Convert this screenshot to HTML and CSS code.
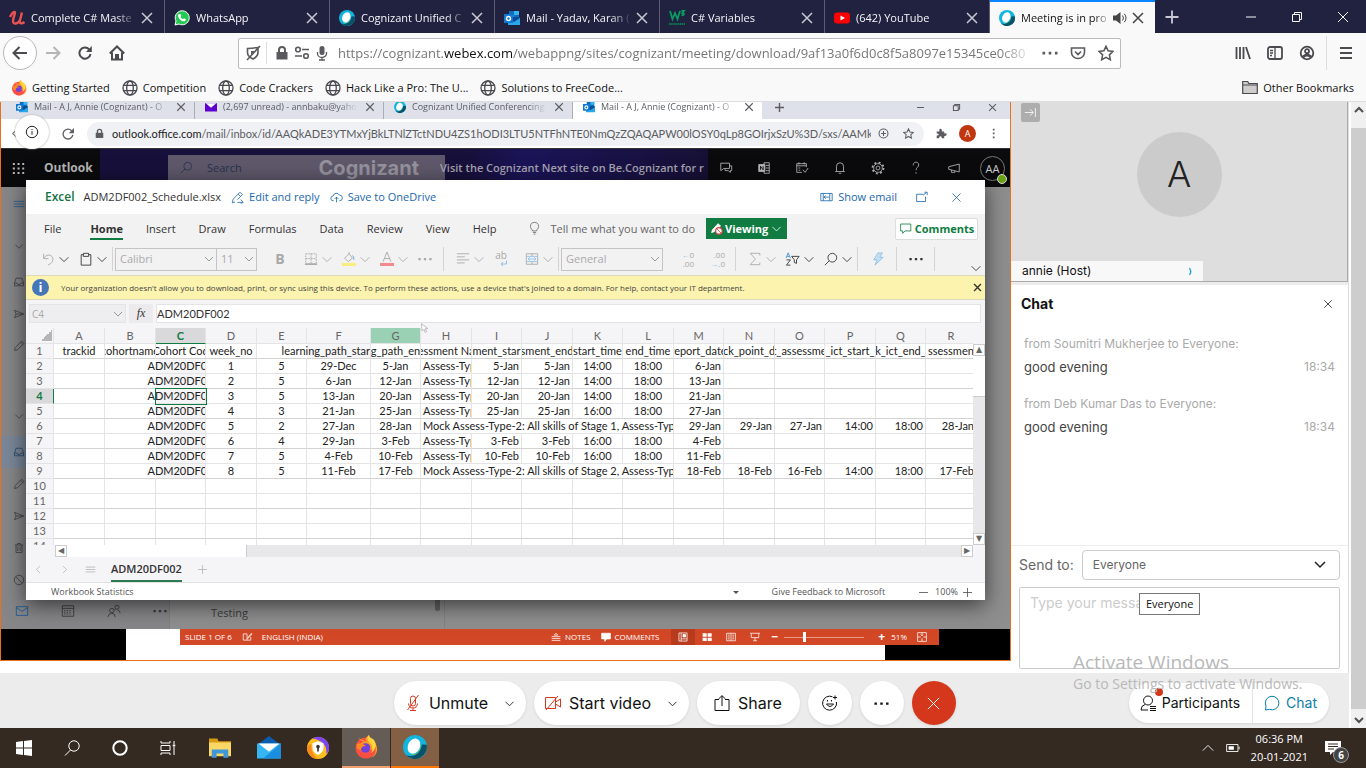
FILE: index.html
```html
<!DOCTYPE html>
<html lang="en">
<head>
<meta charset="utf-8">
<meta name="viewport" content="width=device-width, initial-scale=1">
<title>Meeting is in progress</title>
<link rel="stylesheet" href="styles.css">
</head>
<body>
<svg class="sprite" aria-hidden="true">
  <symbol id="x" viewBox="0 0 16 16"><path d="M3 3l10 10M13 3L3 13"/></symbol>
  <symbol id="chev" viewBox="0 0 16 16"><path d="M3 6l5 5 5-5"/></symbol>
  <symbol id="plus" viewBox="0 0 16 16"><path d="M8 1.500v13M1.500 8h13"/></symbol>
  <symbol id="min" viewBox="0 0 16 16"><path d="M3 8h10"/></symbol>
  <symbol id="restore" viewBox="0 0 16 16"><path d="M3.500 5.500h7v7h-7zM5.500 5.500v-2h7v7h-2"/></symbol>
  <symbol id="dots" viewBox="0 0 16 16"><path fill="currentColor" stroke="none" d="M.5 6.800h2.600v2.600H.5zM6.700 6.800h2.600v2.600H6.700zM12.900 6.800h2.600v2.600h-2.600z"/></symbol>
  <symbol id="reload" viewBox="0 0 16 16"><path d="M13.500 9a5.600 5.600 0 1 1-1.300-4.600"/><path fill="currentColor" stroke="none" d="M14.800 1v6H8.900z"/></symbol>
  <symbol id="lock" viewBox="0 0 16 16"><path fill="currentColor" stroke="none" d="M2.500 7h11v7.500h-11z"/><path stroke-width="2" d="M5 7.500V5a3 3 0 0 1 6 0v2.500"/></symbol>
  <symbol id="star" viewBox="0 0 16 16"><path d="M8 1.300l2.100 4.500 4.900.6-3.600 3.400.9 4.900L8 12.300l-4.300 2.400.9-4.900L1 6.400l4.900-.6z"/></symbol>
  <symbol id="globe" viewBox="0 0 16 16"><circle cx="8" cy="8" r="7"/><ellipse cx="8" cy="8" rx="3.300" ry="7"/><path d="M1.500 5.300h13M1.500 10.700h13"/></symbol>
  <symbol id="webex" viewBox="0 0 16 16"><circle cx="8" cy="8" r="8" fill="#12b5dd" stroke="none"/><path fill="#0b5269" stroke="none" d="M15.800 6.500A8 8 0 0 1 2 13.300c5 2 10-1 10.500-7z"/><path fill="#74bf4b" stroke="none" d="M10.500 2.800A6.300 6.300 0 0 1 4 12.800c5 2.500 10.800-4 6.500-10z"/><ellipse cx="7.300" cy="7.400" rx="4" ry="5.300" transform="rotate(25 7.300 7.400)" fill="#fff" stroke="none"/></symbol>
  <symbol id="outlook" viewBox="0 0 16 16"><g stroke="none"><path fill="#0f6cbd" d="M5 1h10v8H5z"/><path fill="#35b8f1" d="M10 1h5v4h-5z"/><path fill="#1490df" d="M5 5h5v4H5z"/><path fill="#28a8ea" d="M4 8l12 0v7H4z"/><path fill="#0a4a92" d="M4 8l6 4 6-4v-1H4z"/><path fill="#0f78d4" d="M0 4h9v9H0z"/></g><circle cx="4.500" cy="8.500" r="2" stroke="#fff" stroke-width="1.400"/></symbol>
  <symbol id="firefox" viewBox="0 0 24 24"><g stroke="none"><circle cx="12" cy="13" r="10.500" fill="#ff4f42"/><path fill="#ff9a24" d="M5 3c0 2 3 3 5 4-3 0-5 2-4 6 1 5 8 6 10 2 3 0 4-3 4-6 3 5 2 11-3 14 8-3 8-14 1-18-2-1-3-3-3-5-3 2-4 4-3 7-2-2-5-2-7-4z"/><path fill="#ffd53c" d="M15 0c-3 3-1 6 1 8 3 3 3 7 1 10 6-4 6-10 2-14-2-1-4-2-4-4z"/><circle cx="11.500" cy="13" r="4.800" fill="#7141d8"/><path fill="#ff8a1f" d="M3 9c3-1 7 0 9 2-3 0-5 1-5 4-4 0-5-3-4-6z"/></g></symbol>
  <symbol id="inbox" viewBox="0 0 16 16"><path d="M2 9.500L4 3h8l2 6.500V13H2zM2 9.500h3.500l1 1.800h3l1-1.800H14"/></symbol>
  <symbol id="send" viewBox="0 0 16 16"><path d="M2 3l12 5-12 5 2-5zM4 8h10"/></symbol>
  <symbol id="pencil" viewBox="0 0 16 16"><path d="M2 14l1-4 8.500-8.500 3 3L6 13zM10 3l3 3"/></symbol>
  <symbol id="ham" viewBox="0 0 16 16"><path d="M1 4.500h14M1 8h14M1 11.500h14"/></symbol>
  <symbol id="info" viewBox="0 0 16 16"><circle cx="8" cy="8" r="5.700"/><path d="M8 7.200v3.600M8 5v1"/></symbol>
</svg>

<header class="tabs">
  <button class="tab"><svg class="i" viewBox="0 0 16 16"><path stroke="#ea5252" stroke-width="2.400" d="M1 7c1-2 3-5 4.500-5S4 8 4 11c0 4 5 3 7-1 1-3 1.500-6 2-7.500M11 10c-1 4 2 4 4.500 2"/></svg><span>Complete C# Maste</span><svg class="i tab-x"><use href="#x"/></svg></button>
  <button class="tab"><svg class="i" viewBox="0 0 16 16"><path fill="#25c853" stroke="#fff" d="M1 15l1-4a7 7 0 1 1 3 3z"/><path fill="#fff" stroke="none" d="M5 4l1.500 0 .8 2-.8 1c.5 1 1.300 1.700 2.400 2.200l1-.9 2 1c0 2-2 2.500-4 1.600-2-1-4-3.500-3.800-5.400 0-.7.400-1.200.9-1.500z"/></svg><span>WhatsApp</span><svg class="i tab-x"><use href="#x"/></svg></button>
  <button class="tab"><svg class="i"><use href="#webex"/></svg><span>Cognizant Unified C</span><svg class="i tab-x"><use href="#x"/></svg></button>
  <button class="tab"><svg class="i"><use href="#outlook"/></svg><span>Mail - Yadav, Karan (</span><svg class="i tab-x"><use href="#x"/></svg></button>
  <button class="tab"><svg class="i" viewBox="0 0 16 16"><path stroke="#0a9b62" stroke-width="1.800" d="M1 1l2.500 8L6 3l2.500 6L11 1M12.500 1H15l-1.500 2c2.500 0 1.500 3-1 2"/><path stroke="#0a7b50" stroke-dasharray="1.500 .6" stroke-width="2" d="M0 14h16"/></svg><span>C# Variables</span><svg class="i tab-x"><use href="#x"/></svg></button>
  <button class="tab"><svg class="i" viewBox="0 0 16 16"><rect y="2.500" width="16" height="11" rx="3" fill="#f00" stroke="none"/><path fill="#fff" stroke="none" d="M6.500 5.500L11 8l-4.500 2.500z"/></svg><span>(642) YouTube</span><svg class="i tab-x"><use href="#x"/></svg></button>
  <button class="tab tab-on"><svg class="i"><use href="#webex"/></svg><span>Meeting is in pro</span><svg class="i dark" viewBox="0 0 16 16"><path fill="currentColor" stroke="none" d="M1 5.500h3L8.500 2v12L4 10.500H1z"/><path d="M10.500 5.500q2 2.500 0 5M12.300 3.800q3.500 4.200 0 8.400"/></svg><svg class="i tab-x"><use href="#x"/></svg></button>
  <button class="newtab" aria-label="New tab"><svg class="i"><use href="#plus"/></svg></button>
  <div class="win"><button aria-label="Minimize"><svg class="i"><use href="#min"/></svg></button><button aria-label="Restore"><svg class="i"><use href="#restore"/></svg></button><button aria-label="Close"><svg class="i"><use href="#x"/></svg></button></div>
</header>

<nav class="bar">
  <div class="navs">
    <button class="back" aria-label="Back"><svg class="i" viewBox="0 0 16 16"><path d="M15 8H1.500M7.500 2L1.500 8l6 6"/></svg></button>
    <button class="pale" aria-label="Forward"><svg class="i" viewBox="0 0 16 16"><path d="M1 8h13.500M8.500 2l6 6-6 6"/></svg></button>
    <button aria-label="Reload"><svg class="i"><use href="#reload"/></svg></button>
    <button aria-label="Home"><svg class="i" viewBox="0 0 16 16"><path d="M.8 8.500L8 1.500l7.200 7M3 7.500v7h10v-7"/><path fill="currentColor" stroke="none" d="M6 9h4v6H6z"/></svg></button>
  </div>
  <div class="url">
    <svg class="i" viewBox="0 0 16 16"><path d="M2.500 3.500Q8 3 13 2.500v5q0 4-5 6.500-5.500-2.500-5.500-6.500zM15 1L2 15"/><path fill="currentColor" stroke="none" d="M6 6h4l-4 4z"/></svg>
    <span class="rule"></span>
    <svg class="i"><use href="#lock"/></svg>
    <svg class="i" viewBox="0 0 16 16"><circle cx="4" cy="4.500" r="2.300"/><circle cx="12" cy="11" r="2.300"/><path d="M8 4.500h7M1 11h7"/></svg>
    <svg class="i" viewBox="0 0 16 16"><rect x="5.500" y="1" width="5" height="9" rx="2.500" fill="currentColor" stroke="none"/><path stroke-width="1.300" d="M3.500 7v1.500a4.500 4 0 0 0 9 0V7M8 12.500V15M5 15h6"/></svg>
    <span class="addr">https://cognizant.<b>webex.com</b>/webappng/sites/cognizant/meeting/download/9af13a0f6d0c8f5a8097e15345ce0c80</span>
    <svg class="i"><use href="#dots"/></svg>
    <svg class="i" viewBox="0 0 16 16"><path d="M1.500 3h13v4.500a6.500 6 0 0 1-13 0zM5 6.500l3 3 3-3"/></svg>
    <svg class="i"><use href="#star"/></svg>
  </div>
  <div class="tools">
    <button aria-label="Library"><svg class="i" viewBox="0 0 16 16"><path d="M1.500 2v12M5 2v12M8.500 2v12M11 2l4 12"/></svg></button>
    <button aria-label="Sidebars"><svg class="i" viewBox="0 0 16 16"><rect x="1" y="2" width="14" height="12" rx="2"/><path d="M8 2v12M3 5.500h3M3 8h3M3 10.500h2" stroke-width="1.300"/></svg></button>
    <button aria-label="Account"><svg class="i" viewBox="0 0 16 16"><circle cx="8" cy="8" r="6.300"/><circle cx="8" cy="6.200" r="2"/><path d="M4 12q4-4 8 0" stroke-width="3"/></svg></button>
    <button class="menu" aria-label="Menu"><svg class="i" viewBox="0 0 16 16"><path d="M2 3h12M2 8h12M2 13h12"/></svg></button>
  </div>
</nav>

<nav class="marks">
  <a href="#"><svg class="i"><use href="#firefox"/></svg>Getting Started</a>
  <a href="#"><svg class="i"><use href="#globe"/></svg>Competition</a>
  <a href="#"><svg class="i"><use href="#globe"/></svg>Code Crackers</a>
  <a href="#"><svg class="i"><use href="#globe"/></svg>Hack Like a Pro: The U...</a>
  <a href="#"><svg class="i"><use href="#globe"/></svg>Solutions to FreeCode...</a>
  <a href="#" class="other"><svg class="i" viewBox="0 0 16 16"><path fill="#cfcccc" stroke-width="1.200" d="M.7 13.500v-12h5l1 2h8.600v10zM.7 5h14.600"/></svg>Other Bookmarks</a>
</nav>

<main class="page">
  <div class="room">
    <section class="share" aria-label="Shared screen">
      <div class="ctabs">
        <div class="ctab"><svg class="i"><use href="#outlook"/></svg><span>Mail - A J, Annie (Cognizant) - O</span><svg class="i s"><use href="#x"/></svg></div>
        <div class="ctab"><svg class="i" viewBox="0 0 16 16"><path fill="#5f01d1" stroke="none" d="M0 3h16v11H0z"/><path fill="#fff" stroke="none" d="M1 3h14L8 9z"/></svg><span>(2,697 unread) - annbaku@yaho</span><svg class="i s"><use href="#x"/></svg></div>
        <div class="ctab"><svg class="i"><use href="#webex"/></svg><span>Cognizant Unified Conferencing |</span><svg class="i s"><use href="#x"/></svg></div>
        <div class="ctab ctab-on"><svg class="i"><use href="#outlook"/></svg><span>Mail - A J, Annie (Cognizant) - O</span><svg class="i s"><use href="#x"/></svg></div>
        <svg class="i cplus"><use href="#plus"/></svg>
        <div class="cwin"><svg class="i s"><use href="#min"/></svg><svg class="i s"><use href="#restore"/></svg><svg class="i s"><use href="#x"/></svg></div>
      </div>
      <div class="cbar">
        <svg class="i s" viewBox="0 0 16 16"><path d="M9 3L4 8l5 5"/></svg>
        <svg class="i"><use href="#reload"/></svg>
        <div class="cpill"><svg class="i s"><use href="#lock"/></svg><span class="curl"><b>outlook.office.com</b>/mail/inbox/id/AAQkADE3YTMxYjBkLTNlZTctNDU4ZS1hODI3LTU5NTFhNTE0NmQzZQAQAPW00lOSY0qLp8GOIrjxSzU%3D/sxs/AAMkA...</span><svg class="i s" viewBox="0 0 16 16"><circle cx="8" cy="8" r="6.500"/><path d="M8 4.500v7M4.500 8h7"/></svg><svg class="i s"><use href="#star"/></svg></div>
        <svg class="i s" viewBox="0 0 16 16"><path fill="currentColor" stroke="none" d="M1 5h4q-1-4 1.500-4T8.500 5H12v3q3.500-1 3.500 1.500T12 11.500V15H8.500q0-3-2-3T4.500 15H1v-4q3 0 3-1.500T1 8z"/></svg>
        <span class="cuser">A</span>
        <svg class="i s" viewBox="0 0 16 16"><path fill="currentColor" stroke="none" d="M7 1h2.500v2.500H7zM7 6.700h2.500v2.500H7zM7 12.500h2.500V15H7z"/></svg>
        <span class="infodot"><svg class="i"><use href="#info"/></svg></span>
      </div>
      <div class="otop">
        <div class="obrand"><svg class="i" viewBox="0 0 16 16"><path stroke-dasharray="2.500 3.300" stroke-width="2.500" d="M1 2.500h14M1 8h14M1 13.500h14"/></svg><b>Outlook</b></div>
        <div class="obanner">
          <div class="osearch"><svg class="i" viewBox="0 0 16 16"><circle cx="9.500" cy="6.500" r="4.800"/><path d="M6 10l-5 5"/></svg><span>Search</span><strong>Cognizant</strong></div>
          <span class="ovisit">Visit the Cognizant Next site on Be.Cognizant for r</span>
        </div>
        <div class="oicons">
          <svg class="i" viewBox="0 0 16 16"><path d="M2 2.500h10v6H5.500L2 11zM12 5.500h2.500V11H13v2l-2.500-2H7V8.500"/></svg>
          <svg class="i" viewBox="0 0 16 16"><path d="M8 2h6v12H8zM10 5h4M10 8h4M10 11h4"/><path fill="currentColor" d="M2 4h7v8H2z"/><path stroke="#0b0b0d" d="M4 10V6l3 4V6"/></svg>
          <svg class="i" viewBox="0 0 16 16"><path d="M8 13H2V3h11v4M2 5.500h11M4.500 1.500V4M10.500 1.500V4M4 8h2M4 10.500h2M9 10l2.500 3L15 8"/></svg>
          <svg class="i" viewBox="0 0 16 16"><path d="M2.500 12h11M4 12V6a4 4 0 0 1 8 0v6M6.500 14h3"/></svg>
          <svg class="i" viewBox="0 0 16 16"><circle cx="8" cy="8" r="2.200"/><circle cx="8" cy="8" r="5"/><circle cx="8" cy="8" r="6.300" stroke-width="2" stroke-dasharray="2.200 2.750"/></svg>
          <svg class="i" viewBox="0 0 16 16"><path d="M4.800 5c0-5 6.500-4.500 6.300-.5 0 2.500-3 3-3 6M8 12.800v1.700"/></svg>
          <svg class="i" viewBox="0 0 16 16"><path d="M14 3.500v9L2 9.500v-3zM5 10v3h4v-2"/></svg>
          <span class="oav">AA</span>
        </div>
      </div>
      <div class="obody">
        <div class="oside">
          <div class="rail">
            <svg class="i blue"><use href="#ham"/></svg>
            <svg class="i g10"><use href="#chev"/></svg>
            <svg class="i g4"><use href="#inbox"/></svg>
            <svg class="i"><use href="#send"/></svg>
            <svg class="i"><use href="#pencil"/></svg>
            <svg class="i g38"><use href="#chev"/></svg>
            <svg class="i g4 sel"><use href="#inbox"/></svg>
            <svg class="i"><use href="#pencil"/></svg>
            <svg class="i"><use href="#send"/></svg>
            <svg class="i" viewBox="0 0 16 16"><path d="M2.500 4h11M4 4v10h8V4M6 4V2h4v2M6.500 6v6M9.500 6v6"/></svg>
            <svg class="i" viewBox="0 0 16 16"><circle cx="8" cy="8" r="6.300"/><path d="M3.500 3.500l9 9"/></svg>
          </div>
          <div class="onav">
            <svg class="i blue" viewBox="0 0 16 16"><path d="M1.500 3h13v10h-13zM1.500 4l6.500 4.500L14.500 4"/></svg>
            <svg class="i" viewBox="0 0 16 16"><path d="M1.500 2h13v12h-13zM1.500 5h13"/><path stroke-dasharray="1.500 1.500" d="M3.500 7.500h9M3.500 9.500h9M3.500 11.500h9"/></svg>
            <svg class="i" viewBox="0 0 16 16"><circle cx="5.500" cy="7.500" r="2.500"/><path d="M1 15q1-4.500 4.500-4.500T9.500 15M12 7q3 .5 3 3.500M8.500 6.500Q9 5.800 10 5.500"/><circle cx="11.500" cy="3.800" r="2.300"/></svg>
            <svg class="i s"><use href="#dots"/></svg>
          </div>
        </div>
        <div class="olist"><p>Testing</p><span class="lthumb"></span></div>
        <div class="opane"></div>
      </div>
      <div class="desk">
        <div class="ppt">
          <span>SLIDE 1 OF 6</span><svg class="i s" viewBox="0 0 16 16"><path d="M14 8v5H2V3h6v10M15 2l-5 6-1 2 2-1 5-6z"/></svg><span>ENGLISH (INDIA)</span>
          <span class="pr"><svg class="i s" viewBox="0 0 16 16"><path d="M1 7.500h14M1 10.500h14M1 13.500h14M5 5l3-3 3 3z"/></svg>NOTES</span>
          <span class="pc"><svg class="i s" viewBox="0 0 16 16"><path fill="currentColor" d="M1 2h14v9H9l-3 4v-4H1z"/></svg>COMMENTS</span>
          <span class="pview on"><svg class="i s" viewBox="0 0 16 16"><path d="M1.500 1.500h13v13h-13zM5 2v12M5 11h9"/><path fill="currentColor" d="M8 4h4v4H8z"/></svg></span>
          <span class="pview"><svg class="i s" viewBox="0 0 16 16"><path fill="currentColor" stroke="none" d="M1 2h6.500v5.500H1zM9 2h6.500v5.500H9zM1 9h6.500v5.500H1zM9 9h6.500v5.500H9z"/></svg></span>
          <span class="pview"><svg class="i s" viewBox="0 0 16 16"><path d="M1 2h14v12H1zM8 2v12M3 5h3M3 8h3M3 11h3M10 5h3M10 8h3M10 11h3"/></svg></span>
          <span class="pview"><svg class="i s" viewBox="0 0 16 16"><path d="M0 2h16M2 2v7h12V2M8 9v5M5 14h6"/></svg></span>
          <b>−</b><input class="pzoom" type="range" value="24" aria-label="Slide zoom"><b>+</b><span class="pct">51%</span><svg class="i s" viewBox="0 0 16 16"><path d="M1 1h14v14H1zM8 1v5M6 4l2 2 2-2M8 15v-5M1 8h5M15 8h-5"/></svg>
        </div>
      </div>

      <div class="modal">
        <div class="mhead"><b>Excel</b><span class="fname">ADM2DF002_Schedule.xlsx</span><a href="#"><svg class="i" viewBox="0 0 16 16"><path d="M1.500 14.500l1.200-4.500L11 1.500 14 4.500 8 10.500M1.500 14.500l3.500-1M9 4l3 3M8 14h6M12 10.500l3 3.500-3 1.500"/></svg>Edit and reply</a><a href="#"><svg class="i" viewBox="0 0 16 16"><path d="M4.500 12H4a3 3 0 0 1 0-6 4 4 0 0 1 7.500-1A3.500 3.500 0 0 1 12 12h-.5M8 14V7.500M5.500 10L8 7.500l2.500 2.500"/></svg>Save to OneDrive</a><a href="#" class="showmail"><svg class="i" viewBox="0 0 16 16"><path d="M1 3h14v9H1zM4 3v9M12 3v9M5 7.500h6M7 5.500l-2 2 2 2"/></svg>Show email</a><button aria-label="Open in new window"><svg class="i" viewBox="0 0 16 16"><path d="M10 4H2v9h11V7M10 5l4-3M11.500 1.500H15V5"/></svg></button><button aria-label="Close"><svg class="i"><use href="#x"/></svg></button></div>
        <div class="ribbon">
          <div class="rtabs">
            <button>File</button><button class="on">Home</button><button>Insert</button><button>Draw</button><button>Formulas</button><button>Data</button><button>Review</button><button>View</button><button>Help</button>
            <button class="tell"><svg class="i" viewBox="0 0 16 16"><path d="M5.500 11C5.500 9 3 8.500 3 5.500a5 5 0 0 1 10 0C13 8.500 10.500 9 10.500 11zM6 13h4M7 15h2"/></svg>Tell me what you want to do</button>
            <button class="viewing"><svg class="i" viewBox="0 0 16 16"><path fill="#fff" d="M2 13l1-3.500L10 2l3 3-8 7z"/><circle cx="11" cy="11" r="4" fill="#fff" stroke="#d83b3b" stroke-width="1.400"/><path stroke="#d83b3b" d="M8 8l6 6"/></svg>Viewing<svg class="i"><use href="#chev"/></svg></button>
            <button class="comments"><svg class="i" viewBox="0 0 16 16"><path d="M2 2.500h12.500v8.500H7.500L4.500 14v-3H2z"/></svg>Comments</button>
          </div>
          <div class="rtools">
            <button class="dim" aria-label="Undo"><svg class="i" viewBox="0 0 16 16"><path d="M3 2v5.500h5.500M3 7q4-5 8-3t2 7q-1 2-5 4"/></svg></button><button aria-label="Undo list"><svg class="i"><use href="#chev"/></svg></button>
            <button class="a" aria-label="Paste"><svg class="i" viewBox="0 0 16 16"><path d="M5 3H2.500v12h11V3H11M5 1.500h6V5H5z"/></svg></button><button aria-label="Paste options"><svg class="i"><use href="#chev"/></svg></button>
            <i class="sep"></i>
            <select class="font" aria-label="Font"><option>Calibri</option></select><select class="size" aria-label="Font size"><option>11</option></select>
            <button class="c dim bold" aria-label="Bold">B</button>
            <button class="c dim" aria-label="Borders"><svg class="i" viewBox="0 0 16 16"><path stroke-dasharray="2 1" d="M2 2h12v11H2zM8 2v11M2 7.500h12"/><path stroke-width="1.600" d="M1 14h14"/></svg></button><button class="dim" aria-label="Border options"><svg class="i"><use href="#chev"/></svg></button>
            <button class="a dim" aria-label="Fill colour"><svg class="i" viewBox="0 0 16 16"><path d="M3 7l5-5 4 5-5 4zM8 2V0"/><path stroke="#5fa3d8" d="M12 4q2 1 1.500 5"/><path fill="#f8ee7d" stroke="none" d="M0 12.500h16V16H0z"/></svg></button><button class="dim" aria-label="Fill options"><svg class="i"><use href="#chev"/></svg></button>
            <button class="a dim" aria-label="Font colour"><svg class="i" viewBox="0 0 16 16"><path d="M3.500 11L8 0l4.500 11M5 7.500h6"/><path fill="#f58a8e" stroke="none" d="M0 12.500h16V16H0z"/></svg></button><button class="dim" aria-label="Font colour options"><svg class="i"><use href="#chev"/></svg></button>
            <button class="a dim" aria-label="More font options"><svg class="i"><use href="#dots"/></svg></button>
            <i class="sep b"></i>
            <button class="b dim" aria-label="Align"><svg class="i" viewBox="0 0 16 16"><path d="M1 2h14M1 5.500h9M1 9h14M1 12.500h9"/></svg></button><button class="dim" aria-label="Align options"><svg class="i"><use href="#chev"/></svg></button>
            <button class="a dim wrap" aria-label="Wrap text">ab<svg class="i s" viewBox="0 0 16 16"><path stroke="#8fc1e6" stroke-width="2" d="M14 1v7H3M7 4L3 8l4 4"/></svg></button>
            <button class="c dim" aria-label="Merge"><svg class="i" viewBox="0 0 16 16"><path d="M1.500 2h13v12h-13zM8 2v3M8 11v3"/><path stroke="#8fc1e6" d="M2 5h12M2 11h12M3.500 8h9M5.500 6l-2 2 2 2M10.500 6l2 2-2 2"/></svg></button><button class="dim" aria-label="Merge options"><svg class="i"><use href="#chev"/></svg></button>
            <i class="sep"></i>
            <select class="fmt" aria-label="Number format"><option>General</option></select>
            <button class="c dim dec" aria-label="Increase decimal"><em>←</em>0<br>.00</button>
            <button class="c dim dec" aria-label="Decrease decimal">.00<br><em>→</em>.0</button>
            <i class="sep b"></i>
            <button class="b dim" aria-label="Sum"><svg class="i" viewBox="0 0 16 16"><path d="M13.500 4V1.500H2.500L8.500 8l-6 6.500h11V12"/></svg></button><button class="dim" aria-label="Sum options"><svg class="i"><use href="#chev"/></svg></button>
            <button class="a" aria-label="Sort and filter"><svg class="i" viewBox="0 0 16 16"><path stroke="#3e8fd0" d="M0 7l2.500-6L5 7M1 5h3"/><path d="M.5 9H5L.5 15H5M6.500 5H15l-3 4v4l-2.500-1V9z"/></svg></button><button aria-label="Sort options"><svg class="i"><use href="#chev"/></svg></button>
            <button class="a" aria-label="Find"><svg class="i" viewBox="0 0 16 16"><circle cx="9.500" cy="6.500" r="5"/><path d="M6 10l-5 5"/></svg></button><button aria-label="Find options"><svg class="i"><use href="#chev"/></svg></button>
            <i class="sep"></i>
            <button class="b dim" aria-label="Ideas"><svg class="i" viewBox="0 0 16 16"><path fill="#c4def2" stroke="#8fbfe6" d="M8 1h5l-3 5h4L4.500 15 7 9H3z"/></svg></button>
            <i class="sep b"></i>
            <button class="b" aria-label="More commands"><svg class="i"><use href="#dots"/></svg></button>
            <i class="sep b"></i>
            <button class="last" aria-label="Collapse ribbon"><svg class="i"><use href="#chev"/></svg></button>
          </div>
        </div>
        <div class="notice"><span class="nicon">i</span><p>Your organization doesn't allow you to download, print, or sync using this device. To perform these actions, use a device that's joined to a domain. For help, contact your IT department.</p><button aria-label="Dismiss"><svg class="i"><use href="#x"/></svg></button></div>
        <div class="fbar"><select aria-label="Name box"><option>C4</option></select><span class="fx">fx</span><input type="text" value="ADM20DF002" aria-label="Formula"></div>
        <div class="gridwrap">
          <div class="gridclip">
          <table class="grid">
            <colgroup><col class="w28"><col class="w51"><col class="w51"><col class="w50"><col class="w51"><col class="w50"><col class="w64"><col class="w50"><col class="w51"><col class="w50"><col class="w51"><col class="w50"><col class="w51"><col class="w50"><col class="w51"><col class="w50"><col class="w51"><col class="w50"><col class="w51"></colgroup>
            <thead><tr><th class="corner"></th><th>A</th><th>B</th><th class="csel">C</th><th>D</th><th>E</th><th>F</th><th class="ghot">G</th><th>H</th><th>I</th><th>J</th><th>K</th><th>L</th><th>M</th><th>N</th><th>O</th><th>P</th><th>Q</th><th>R</th></tr></thead>
            <tbody>
            <tr><th>1</th><td><div>trackid</div></td><td><div>cohortname</div></td><td><div>Cohort Cod</div></td><td><div>week_no</div></td><td class="nb"></td><td><div class="ol e">learning_path_star</div></td><td><div>g_path_en</div></td><td><div>essment Na</div></td><td><div>ment_star</div></td><td><div>sment_end</div></td><td><div>start_time</div></td><td><div>end_time</div></td><td><div>report_date</div></td><td><div>ck_point_d</div></td><td><div>t_assessme</div></td><td><div>_ict_start_</div></td><td><div>k_ict_end_</div></td><td><div class="l">ssessment</div></td></tr>
            <tr><th>2</th><td></td><td class="nb"></td><td><div class="ol">ADM20DF00</div></td><td><div>1</div></td><td><div>5</div></td><td><div>29-Dec</div></td><td><div>5-Jan</div></td><td><div class="l">Assess-Typ</div></td><td><div class="r">5-Jan</div></td><td><div class="r">5-Jan</div></td><td><div>14:00</div></td><td><div>18:00</div></td><td><div class="r">6-Jan</div></td><td></td><td></td><td></td><td></td><td></td></tr>
            <tr><th>3</th><td></td><td class="nb"></td><td><div class="ol">ADM20DF00</div></td><td><div>2</div></td><td><div>5</div></td><td><div>6-Jan</div></td><td><div>12-Jan</div></td><td><div class="l">Assess-Typ</div></td><td><div class="r">12-Jan</div></td><td><div class="r">12-Jan</div></td><td><div>14:00</div></td><td><div>18:00</div></td><td><div class="r">13-Jan</div></td><td></td><td></td><td></td><td></td><td></td></tr>
            <tr><th class="rsel">4</th><td></td><td class="nb"></td><td class="cur"><div class="ol">ADM20DF00</div></td><td><div>3</div></td><td><div>5</div></td><td><div>13-Jan</div></td><td><div>20-Jan</div></td><td><div class="l">Assess-Typ</div></td><td><div class="r">20-Jan</div></td><td><div class="r">20-Jan</div></td><td><div>14:00</div></td><td><div>18:00</div></td><td><div class="r">21-Jan</div></td><td></td><td></td><td></td><td></td><td></td></tr>
            <tr><th>5</th><td></td><td class="nb"></td><td><div class="ol">ADM20DF00</div></td><td><div>4</div></td><td><div>3</div></td><td><div>21-Jan</div></td><td><div>25-Jan</div></td><td><div class="l">Assess-Typ</div></td><td><div class="r">25-Jan</div></td><td><div class="r">25-Jan</div></td><td><div>16:00</div></td><td><div>18:00</div></td><td><div class="r">27-Jan</div></td><td></td><td></td><td></td><td></td><td></td></tr>
            <tr><th>6</th><td></td><td class="nb"></td><td><div class="ol">ADM20DF00</div></td><td><div>5</div></td><td><div>2</div></td><td><div>27-Jan</div></td><td><div>28-Jan</div></td><td colspan="5"><div class="l">Mock Assess-Type-2: All skills of Stage 1, Assess-Type-</div></td><td><div class="r">29-Jan</div></td><td><div class="r">29-Jan</div></td><td><div class="r">27-Jan</div></td><td><div class="r">14:00</div></td><td><div class="r">18:00</div></td><td><div class="r">28-Jan</div></td></tr>
            <tr><th>7</th><td></td><td class="nb"></td><td><div class="ol">ADM20DF00</div></td><td><div>6</div></td><td><div>4</div></td><td><div>29-Jan</div></td><td><div>3-Feb</div></td><td><div class="l">Assess-Typ</div></td><td><div class="r">3-Feb</div></td><td><div class="r">3-Feb</div></td><td><div>16:00</div></td><td><div>18:00</div></td><td><div class="r">4-Feb</div></td><td></td><td></td><td></td><td></td><td></td></tr>
            <tr><th>8</th><td></td><td class="nb"></td><td><div class="ol">ADM20DF00</div></td><td><div>7</div></td><td><div>5</div></td><td><div>4-Feb</div></td><td><div>10-Feb</div></td><td><div class="l">Assess-Typ</div></td><td><div class="r">10-Feb</div></td><td><div class="r">10-Feb</div></td><td><div>16:00</div></td><td><div>18:00</div></td><td><div class="r">11-Feb</div></td><td></td><td></td><td></td><td></td><td></td></tr>
            <tr><th>9</th><td></td><td class="nb"></td><td><div class="ol">ADM20DF00</div></td><td><div>8</div></td><td><div>5</div></td><td><div>11-Feb</div></td><td><div>17-Feb</div></td><td colspan="5"><div class="l">Mock Assess-Type-2: All skills of Stage 2, Assess-Type-</div></td><td><div class="r">18-Feb</div></td><td><div class="r">18-Feb</div></td><td><div class="r">16-Feb</div></td><td><div class="r">14:00</div></td><td><div class="r">18:00</div></td><td><div class="r">17-Feb</div></td></tr>
            <tr><th>10</th><td></td><td></td><td></td><td></td><td></td><td></td><td></td><td></td><td></td><td></td><td></td><td></td><td></td><td></td><td></td><td></td><td></td><td></td></tr>
            <tr><th>11</th><td></td><td></td><td></td><td></td><td></td><td></td><td></td><td></td><td></td><td></td><td></td><td></td><td></td><td></td><td></td><td></td><td></td><td></td></tr>
            <tr><th>12</th><td></td><td></td><td></td><td></td><td></td><td></td><td></td><td></td><td></td><td></td><td></td><td></td><td></td><td></td><td></td><td></td><td></td><td></td></tr>
            <tr><th>13</th><td></td><td></td><td></td><td></td><td></td><td></td><td></td><td></td><td></td><td></td><td></td><td></td><td></td><td></td><td></td><td></td><td></td><td></td></tr>
            <tr><th>14</th><td></td><td></td><td></td><td></td><td></td><td></td><td></td><td></td><td></td><td></td><td></td><td></td><td></td><td></td><td></td><td></td><td></td><td></td></tr>
            </tbody>
          </table>
          </div>
          <div class="vscroll"><span>▲</span><i></i><span class="end">▼</span></div>
          <svg class="i cursor" viewBox="0 0 16 16"><path fill="#fff" stroke="#999" d="M4 1l1 12 3-3 2 5 2-1-2-5h4z"/></svg>
        </div>
        <div class="hscroll"><span>◀</span><i></i><span class="end">▶</span></div>
        <div class="sheets"><svg class="i" viewBox="0 0 16 16"><path d="M10 3L5 8l5 5"/></svg><svg class="i" viewBox="0 0 16 16"><path d="M6 3l5 5-5 5"/></svg><svg class="i"><use href="#ham"/></svg><b>ADM20DF002</b><svg class="i"><use href="#plus"/></svg></div>
        <div class="status"><span>Workbook Statistics</span><span class="caret"></span><span class="fb">Give Feedback to Microsoft</span><svg class="i s" viewBox="0 0 16 16"><path d="M0 8h16"/></svg><span>100%</span><svg class="i s" viewBox="0 0 16 16"><path d="M0 8h16M8 0v16"/></svg></div>
      </div>
    </section>

    <aside class="side">
      <div class="tile"><button class="fold" aria-label="Collapse panel"><svg class="i" viewBox="0 0 16 16"><path d="M1 8h10M7.500 4L11.500 8l-4 4M14 2.500v11"/></svg></button><span class="avatar">A</span><div class="who"><span>annie (Host)</span><svg class="i s" viewBox="0 0 16 16"><path d="M6 2q5 6 0 12" stroke-width="2.500"/></svg></div></div>
      <div class="chat">
        <div class="chead"><h2>Chat</h2><button aria-label="Close chat"><svg class="i"><use href="#x"/></svg></button></div>
        <div class="log">
          <article><h3>from Soumitri Mukherjee to Everyone:</h3><p>good evening<time>18:34</time></p></article>
          <article><h3>from Deb Kumar Das to Everyone:</h3><p>good evening<time>18:34</time></p></article>
        </div>
        <div class="compose">
          <div class="to"><label for="to">Send to:</label><select id="to"><option>Everyone</option></select></div>
          <textarea placeholder="Type your message here" aria-label="Message"></textarea>
          <span class="tip">Everyone</span>
        </div>
      </div>
    </aside>
  </div>
  <footer class="controls">
    <div></div>
    <div class="mid">
      <button class="pill"><svg class="i red" viewBox="0 0 16 16"><path d="M8 1a2.500 2.500 0 0 1 2.500 2.500v5a2.500 2.500 0 0 1-5 0v-5A2.500 2.500 0 0 1 8 1zM3.500 8.500Q4 13 8 13t4.500-4.500M8 13v2.500M5 15.500h6M13.500 0L2.500 15"/></svg>Unmute<svg class="i s" viewBox="0 0 16 16"><path d="M1 5l7 7 7-7"/></svg></button>
      <button class="pill"><svg class="i red" viewBox="0 0 16 16"><path d="M.5 2.500h10v11H.5zM10.500 7l5-3v8l-5-3M13 1L1 15"/></svg>Start video<svg class="i s" viewBox="0 0 16 16"><path d="M1 5l7 7 7-7"/></svg></button>
      <button class="pill sh"><svg class="i" viewBox="0 0 16 16"><path d="M5 4.500H1v11h14v-11h-4M8 11V.7M4.500 4L8 .7 11.500 4"/></svg>Share</button>
      <button class="round" aria-label="Reactions"><svg class="i" viewBox="0 0 16 16"><path d="M10.500 1.800A7 7 0 1 0 14.500 7M4.500 9q3.500 5 7 0zM5.500 5v1.500M9.500 5v1.500M13 .5v4M11 2.500h4"/></svg></button>
      <button class="round" aria-label="More options"><svg class="i s"><use href="#dots"/></svg></button>
      <button class="round leave" aria-label="Leave meeting"><svg class="i" viewBox="0 0 16 16"><path d="M2 2l12 12M14 2L2 14"/></svg></button>
    </div>
    <div class="right"><div class="duo"><button><svg class="i" viewBox="0 0 16 16"><circle cx="8" cy="5.500" r="4.500"/><path d="M5 9.500Q1 10.500 1 15h7M10 11.500h6M10 13.500h6M10 15.500h6"/></svg><span class="reddot"></span>Participants</button><button class="teal"><svg class="i" viewBox="0 0 16 16"><path d="M1.500 15l.5-4A6.800 6.800 0 1 1 5.500 14.300z"/></svg>Chat</button></div></div>
  </footer>
  <div class="scroll"><svg class="i" viewBox="0 0 16 16"><path d="M4 10l4-4 4 4"/></svg><i></i><svg class="i" viewBox="0 0 16 16"><path d="M4 6l4 4 4-4"/></svg></div>
</main>

<footer class="task">
  <button aria-label="Start"><svg class="i" viewBox="0 0 16 16"><path fill="#fff" stroke="none" d="M0 2l7-1v6.500H0zM8 .9L16 0v7.500H8zM0 8.500h7V15l-7-1zM8 8.500h8V16l-8-1z"/></svg></button>
  <button aria-label="Search"><svg class="i" viewBox="0 0 16 16"><circle cx="10" cy="6" r="5.200"/><path d="M6.500 10L1 15.500"/></svg></button>
  <button aria-label="Cortana"><svg class="i" viewBox="0 0 16 16"><circle cx="8" cy="8" r="6.700" stroke-width="2"/></svg></button>
  <button aria-label="Task view"><svg class="i" viewBox="0 0 16 16"><path d="M1 1v2h9V1M1 5.500h9v5H1zM1 15v-2h9v2M14 1v3M14 7v8"/><path stroke-width="2.500" d="M14 4.500v2"/></svg></button>
  <button aria-label="File Explorer" class="big"><svg class="i" viewBox="0 0 16 16"><g stroke="none"><path fill="#d99b12" d="M0 1h6l1 2h9v3H0z"/><path fill="#fbd765" d="M0 4h16v10H0z"/><path fill="#3f97d8" d="M2 9h12v6h-3.500v-3h-5v3H2z"/></g></svg></button>
  <button aria-label="Mail" class="big"><svg class="i" viewBox="0 0 16 16"><g stroke="none"><path fill="#0b5cad" d="M0 6l8-6 8 6z"/><path fill="#35b6f2" d="M0 5h16v10H0z"/><path fill="#1a8fe0" d="M16 5v10H4z"/><path fill="#fff" d="M1 5h14L8 10.500z"/></g></svg></button>
  <button aria-label="Secure browser" class="big"><svg class="i" viewBox="0 0 16 16"><g stroke="none"><circle cx="8" cy="8" r="8" fill="#ffbe1e"/><path fill="#7b45f0" d="M4 1a8 8 0 0 1 12 8q-1 3-2 3Q15 3 4 1z"/><path fill="#f88a1c" d="M0 8a8 8 0 0 0 8 8q-5-3-5-11-3 1-3 3z"/><path fill="#fff" d="M8 3l4 1.500V8q0 3-4 5-4-2-4-5V4.500z"/><circle cx="8" cy="7" r="1.300" fill="#333"/><path fill="#333" d="M7.400 7h1.200v3.500H7.400z"/></g></svg></button>
  <button aria-label="Firefox" class="big run"><svg class="i"><use href="#firefox"/></svg></button>
  <button aria-label="Webex" class="big run hot"><svg class="i"><use href="#webex"/></svg></button>
  <div class="tray">
    <svg class="i" viewBox="0 0 16 16"><path d="M2 11l6-6 6 6"/></svg>
    <svg class="i" viewBox="0 0 16 16"><path d="M.7 4h13v8H.7zM15 6.500v3"/><path fill="currentColor" stroke="none" d="M3 6h6v4H3z"/></svg>
    <div class="clock"><span>06:36 PM</span><span>20-01-2021</span></div>
    <span class="act"><svg class="i" viewBox="0 0 16 16"><path fill="#fff" stroke="none" d="M0 1h16v11H8l-3 3v-3H0z"/><path stroke="#352a22" d="M3 4h10M3 6.500h10M3 9h6"/></svg><em>6</em></span>
  </div>
</footer>
<div class="mark"><span>Activate Windows</span><small>Go to Settings to activate Windows.</small></div>
</body>
</html>
```
FILE: styles.css
```css
* { box-sizing: border-box; }
html, body { margin: 0; height: 100%; }
body { display: flex; flex-direction: column; position: relative; overflow: hidden; font: 12px/16px "Open Sans", "Noto Sans", sans-serif; color: #111; background: #fff; }
button, input, select, textarea { font: inherit; color: inherit; border: 0; padding: 0; margin: 0; background: none; border-radius: 0; }
select { appearance: none; background: url("data:image/svg+xml,%3Csvg xmlns='http://www.w3.org/2000/svg' width='12' height='12' fill='none' stroke='%23999'%3E%3Cpath d='M2 4l4 4 4-4'/%3E%3C/svg%3E") no-repeat right 1px center; }
button { display: inline-flex; align-items: center; justify-content: center; flex: none; }
a { color: inherit; text-decoration: none; }
p, h2, h3 { margin: 0; }
.sprite { position: absolute; width: 0; height: 0; }
.i { width: 16px; height: 16px; flex: none; fill: none; stroke: currentColor; stroke-width: 1; overflow: visible; }
.s { width: 11px; height: 11px; stroke-width: 1.500; }

/* browser window */
.tabs { display: flex; height: 33px; background: #20223f; color: #f5f5fa; font-size: 11px; flex: none; }
.tab { flex: 0 1 165px; min-width: 0; justify-content: flex-start; padding: 2px 9px 0; gap: 6px; border-right: 1px solid #5c5d73; }
.tab span { flex: 1; min-width: 0; margin-right: -4px; overflow: hidden; white-space: nowrap; text-align: left; mask-image: linear-gradient(to right, #000 80%, transparent); }
.tab-x { stroke-width: 1.500; color: #c9c9d4; }
.tab-on { background: #f9f9fa; color: #111; border-top: 2px solid #0a84ff; border-right: 0; padding-top: 0; }
.tab-on .tab-x, .dark { color: #444; }
.tab-on span { margin-right: -6px; }
.tab-on .tab-x { margin-left: -4px; }
.newtab { width: 34px; color: #c9c9d4; }
.newtab .i { stroke-width: 1.800; }
.win { margin-left: auto; display: flex; }
.win button { width: 46px; }
.bar { display: flex; align-items: center; height: 40px; background: #f9f9fa; color: #4a4a4f; flex: none; }
.bar .i { stroke-width: 2; }
.navs { display: flex; width: 238px; padding-left: 3px; }
.navs button { width: 32px; height: 34px; }
.navs .back { width: 34px; border: 1px solid #b8b8b8; border-radius: 50%; background: #fff; }
.navs .pale { color: #b5b5b7; }
.url { flex: 1; min-width: 0; display: flex; align-items: center; height: 31px; border: 1px solid #bbb; border-radius: 2px; background: #fff; padding: 0 6px; gap: 4px; color: #5a5a5e; }
.url .rule { width: 1px; height: 22px; background: #ddd; margin: 0 3px 0 1px; }
.addr { flex: 1; min-width: 0; margin: 0 4px; overflow: hidden; white-space: nowrap; font-size: 13px; line-height: 20px; color: #777; mask-image: linear-gradient(to right, #000 95%, transparent); }
.addr b { font-weight: 400; color: #111; }
.url .addr ~ .i { margin-right: 8px; }
.url .addr ~ .i:last-child { margin-right: 0; }
.url .i { stroke-width: 1.600; }
.tools { display: flex; width: 245px; justify-content: flex-end; padding-right: 2px; }
.tools button { width: 32px; height: 34px; }
.tools .i { stroke-width: 1.800; }
.tools .menu { border-left: 1px solid #ddd; margin-left: 3px; width: 38px; }
.marks { display: flex; align-items: center; height: 29px; gap: 12px; padding: 1px 12px 0 11px; background: #f9f9fa; border-bottom: 1px solid #ddd; font-size: 11px; flex: none; }
.marks a { display: flex; align-items: center; gap: 5px; white-space: nowrap; }
.marks .i { color: #4a4a4f; stroke-width: 1.300; }
.marks .other { margin-left: auto; }

.page { flex: 1; min-height: 0; display: grid; grid-template-columns: minmax(0, 1fr) 17px; grid-template-rows: minmax(0, 1fr) 55px; }
.room { display: flex; min-height: 0; background: #fff; }
.scroll { grid-column: 2; grid-row: 1 / 3; display: flex; flex-direction: column; align-items: center; justify-content: space-between; background: #f0f0f0; border-left: 2px solid #fff; color: #505050; }
.scroll i { flex: 1; width: 100%; background: #cdcdcd; margin: 10px 0 3px; }
.scroll .i { stroke-width: 2; }

/* shared screen */
.share { flex: 1; min-width: 0; position: relative; display: flex; flex-direction: column; margin-bottom: 12px; border: 1px solid #e8721c; border-top: 0; overflow: hidden; }
.ctabs { display: flex; height: 17px; padding-left: 5px; background: #dee1e9; color: #5a5c60; font-size: 9px; flex: none; }
.ctab { flex: 0 1 189px; min-width: 0; display: flex; align-items: center; gap: 6px; padding: 0 7px 8px 10px; border-right: 1px solid #aaadb5; }
.ctab .i { width: 12px; height: 12px; }
.ctab span { flex: 1; min-width: 0; overflow: hidden; white-space: nowrap; mask-image: linear-gradient(to right, #000 85%, transparent); }
.ctab-on { background: #fff; border-right: 0; }
.cplus { width: 11px; height: 11px; margin: 0 12px; stroke-width: 2; }
.cwin { margin-left: auto; display: flex; gap: 25px; padding-right: 12px; }
.cbar { position: relative; display: flex; align-items: center; gap: 12px; height: 29px; padding: 0 11px 0 9px; background: #fff; color: #5a5c60; flex: none; }
.cbar > .i:nth-child(2) { margin-left: 28px; width: 14px; height: 14px; stroke-width: 1.500; }
.cpill { flex: 1; min-width: 0; display: flex; align-items: center; gap: 7px; height: 24px; padding: 0 10px 0 7px; border-radius: 12px; background: #f0f1f5; }
.curl { flex: 1; min-width: 0; overflow: hidden; white-space: nowrap; font: 11px/16px "Lato", sans-serif; }
.cpill .s:last-child { margin-left: 7px; }
.curl b { font-weight: 400; color: #222; }
.cuser { width: 17px; border-radius: 50%; background: #c0360f; color: #fff; font-size: 9px; line-height: 17px; text-align: center; }
.infodot { position: absolute; left: 14px; top: -4px; width: 34px; height: 34px; border-radius: 50%; background: #fff; box-shadow: 0 0 2px #999; display: flex; align-items: center; justify-content: center; color: #222; }
.otop { display: flex; height: 39px; background: #0b0b0d; color: #b5b5b5; flex: none; border-top: 1px solid #333; }
.obrand { width: 99px; display: flex; align-items: center; gap: 19px; padding-left: 11px; font-size: 12px; }
.obrand .i { width: 13px; height: 13px; }
.obanner { flex: 1; min-width: 0; display: flex; padding-left: 68px; background: linear-gradient(90deg, #17103a 60%, #1b1458 70%, #171035); }
.osearch { flex: 0 0 277px; display: flex; align-items: center; gap: 14px; margin-top: 6px; padding: 0 0 7px 12px; background: #5e586a; color: #27324e; font-size: 11px; }
.osearch strong { margin-left: auto; padding-right: 26px; font: 700 20px/22px "Inter", sans-serif; color: #96929e; }
.osearch .i { width: 13px; height: 13px; }
.ovisit { flex: 1; min-width: 0; overflow: hidden; white-space: nowrap; margin-left: -5px; line-height: 37px; font-size: 11px; font-weight: 600; color: #a5a2ae; }
.oicons { display: flex; align-items: center; gap: 24px; width: 302px; padding-left: 11px; }
.oicons .i { width: 14px; height: 14px; }
.oav { position: relative; margin-left: -5px; width: 25px; border: 1px solid #777; border-radius: 50%; text-align: center; line-height: 23px; font-size: 11px; color: #ccc; }
.oav::after { content: ""; position: absolute; right: -3px; bottom: -4px; width: 8px; height: 8px; border-radius: 50%; background: #6ba316; border: 1px solid #ddd; }
.obody { flex: 1; min-height: 0; display: flex; background: #8e8e8e; color: #3a3a3c; }
.oside { width: 168px; display: flex; flex-direction: column; background: #868588; }
.rail { flex: 1; min-height: 0; width: 36px; padding-top: 1px; }
.rail .i { display: block; width: 36px; height: 32px; padding: 10px 12px; }
.rail .g10 { margin-top: 10px; }
.rail .g4 { margin-top: 4px; }
.rail .g38 { margin-top: 38px; }
.rail .sel { background: #7a8798; color: #1f4166; }
.blue { color: #1c5a94; }
.onav { display: flex; align-items: center; gap: 32px; height: 36px; padding-left: 14px; }
.onav .i { width: 14px; height: 14px; }
.olist { flex: 0 0 276px; position: relative; display: flex; flex-direction: column; justify-content: flex-end; padding: 0 0 8px 41px; border-left: 1px solid #7e7e80; border-right: 1px solid #828284; font-size: 11px; }
.lthumb { position: absolute; right: 4px; bottom: 18px; width: 5px; height: 40px; border-radius: 2px; background: #636365; }
.desk { flex: none; height: 31px; padding: 0 125px; background: linear-gradient(#fff, #fff) no-repeat 125px 0 / calc(100% - 250px) 100% #000; }
.ppt { display: flex; align-items: center; gap: 10px; height: 16px; margin: 0 -54px 0 54px; padding: 0 12px 0 5px; background: #d24726; color: #fff; font-size: 8px; white-space: nowrap; }
.ppt span { display: flex; align-items: center; gap: 4px; }
.ppt .s { width: 10px; height: 10px; stroke-width: 1.200; }
.ppt .pr { margin-left: auto; }
.ppt .pview { width: 24px; height: 16px; margin-right: -10px; justify-content: center; }
.ppt .pc { margin-right: 2px; }
.ppt .on { background: #b83b1d; }
.ppt b { font-size: 12px; margin: 0 -4px 0 4px; }
.pzoom { appearance: none; width: 80px; height: 11px; background: linear-gradient(#e89c88, #e89c88) center / 100% 1px no-repeat; }
.pzoom::-webkit-slider-thumb { appearance: none; width: 3px; height: 10px; background: #fff; }

/* workbook viewer */
.modal { position: absolute; left: 25px; right: 25px; top: 78px; bottom: 60px; display: flex; flex-direction: column; background: #fff; box-shadow: 0 5px 20px rgba(0,0,0,.6); font-size: 11px; color: #333; }
.mhead { display: flex; align-items: center; height: 34px; padding: 0 22px 0 19px; flex: none; white-space: nowrap; }
.mhead > b { color: #13723f; font-size: 12px; font-weight: 600; }
.mhead a { display: flex; align-items: center; gap: 5px; color: #1a68ad; margin-left: 10px; }
.mhead .i { width: 13px; height: 13px; }
.mhead button { color: #1a68ad; margin-left: 22px; }
.mhead .showmail { margin-left: auto; margin-right: -4px; }
.fname { margin-left: 9px; }
.ribbon { background: #f3f2f3; flex: none; height: 61px; }
.rtabs { display: flex; align-items: center; height: 29px; padding: 0 7px 0 18px; }
.rtabs button { margin-right: 23px; height: 27px; align-items: center; line-height: 16px; }
.rtabs button:first-child { margin-right: 29px; }
.rtabs .on { font-weight: 700; border-bottom: 2px solid #107c41; padding-top: 2px; height: 23px; }
.rtabs .tell { margin-left: 8px; margin-right: 11px; gap: 10px; color: #666; }
.rtabs .i { width: 13px; height: 13px; }
.rtabs .viewing { height: 21px; width: 81px; gap: 2px; color: #fff; background: #107c41; font-weight: 700; margin-right: 0; }
.rtabs .comments { margin: 0 0 0 auto; width: 83px; height: 22px; gap: 3px; background: #fff; border: 1px solid #ddd; border-radius: 2px; color: #107c41; font-weight: 700; }
.rtools { display: flex; align-items: center; height: 32px; padding-left: 14px; }
.rtools button { width: 16px; height: 24px; }
.rtools .i { width: 14px; height: 14px; }
.rtools .dim { color: #a8a8a8; }
.rtools .a { margin-left: 6px; }
.rtools .b { margin-left: 10px; }
.rtools .c { margin-left: 15px; }
.rtools .bold { font-size: 14px; font-weight: 700; }
.sep { flex: none; width: 1px; height: 24px; margin: 0 2px; background: #d5d4d5; }
.sep.b { margin-right: 1px; }
.rtools select { height: 23px; border: 1px solid #c4c4c4; padding: 0 4px; color: #aaa; }
.font { width: 102px; }
.size { width: 41px; margin-left: -1px; }
.fmt { width: 102px; }
.dec { font-size: 8px; line-height: 9px; display: block; text-align: right; white-space: nowrap; }
.rtools .dec { height: 20px; }
.dec em { font-style: normal; color: #8fc1e6; }
.rtools .wrap { display: block; font-size: 10px; line-height: 9px; }
.rtools .wrap .s { width: 9px; height: 8px; display: block; margin-left: 6px; }
.rtools .last { margin: 18px 1px 0 auto; }
.notice { display: flex; align-items: center; height: 25px; padding: 0 2px 0 6px; background: #fbf3ae; border: solid #dcd9ba; border-width: 1px 0; flex: none; }
.nicon { width: 17px; border-radius: 50%; background: #4577b8; color: #fff; font-weight: 700; font-size: 13px; line-height: 17px; text-align: center; }
.notice p { flex: 1; min-width: 0; margin-left: 12px; font-size: 8px; white-space: nowrap; overflow: hidden; color: #444; }
.notice .i { width: 11px; height: 11px; stroke-width: 2; }
.fbar { display: flex; align-items: stretch; height: 28px; padding: 4px 4px 5px 3px; background: #f5f4f6; flex: none; }
.fbar select { width: 97px; margin-right: 3px; padding-left: 2px; background-color: #eeedf0; color: #a8a8a8; font-size: 10px; border: 1px solid #e4e4e6; }
.fx { width: 24px; margin-right: 3px; background: #eceaed; text-align: center; font: italic 12px/19px "Liberation Serif", serif; }
.fbar input { flex: 1; min-width: 0; background: #fff; border: 1px solid #e4e4e6; font: 11px "Lato", sans-serif; }
.gridwrap { flex: 1; min-height: 0; display: flex; position: relative; background: #f5f4f6; }
.gridclip { flex: 1; min-width: 0; overflow: hidden; }
.grid { table-layout: fixed; width: 951px; border-collapse: separate; border-spacing: 0; font: 11px/14px "Lato", sans-serif; color: #222; }
.w28 { width: 28px; } .w50 { width: 50px; } .w51 { width: 51px; } .w64 { width: 64px; }
.grid td, .grid th { height: 15px; padding: 0; border: solid #e4e3e5; border-width: 0 1px 1px 0; }
.grid thead th { height: 16px; }
.grid td { background: #fff; }
.grid tbody tr:nth-child(odd) td { border-bottom-color: #d3d3d3; }
.grid th { font-weight: 400; text-align: center; color: #666; background: #f5f4f6; font-size: 11px; }
.grid div { height: 14px; display: flex; justify-content: center; overflow: hidden; white-space: nowrap; }
.grid .l { justify-content: flex-start; padding-left: 2px; }
.grid .r { justify-content: flex-end; padding-right: 2px; }
.grid .ol { overflow: visible; clip-path: inset(0 0 0 -60px); }
.grid .e { justify-content: flex-end; }
.grid td:has(.ol) { background: none; }
.grid .nb { border-right-color: #fff; }
.grid .csel, .grid .rsel { background: #d9d8da; color: #107c41; font-weight: 700; }
.grid .csel { border-bottom: 1px solid #107c41; }
.grid .rsel { border-right: 1px solid #107c41; }
.grid .ghot { background: #9ad1b5; }
.grid .cur { outline: 1px solid #107c41; position: relative; }
.corner { background: linear-gradient(135deg, transparent 50%, #b5b5b5 50%) no-repeat 15px 2px / 11px 11px #f5f4f6 !important; }
.cursor { position: absolute; left: 393px; top: -5px; width: 10px; height: 10px; }
.vscroll { width: 12px; margin-top: 16px; display: flex; flex-direction: column; background: #e8e7e9; }
.vscroll span, .hscroll span { flex: none; width: 12px; height: 12px; background: #fff; border: 1px solid #ccc; font: 8px/10px "DejaVu Sans", sans-serif; text-align: center; color: #666; }
.vscroll i { height: 41px; background: #fff; border-bottom: 1px solid #ccc; }
.vscroll .end { margin-top: auto; }
.hscroll { display: flex; height: 12px; margin-left: 29px; margin-right: 12px; background: #e8e7e9; flex: none; }
.hscroll i { width: 180px; background: #fff; border-right: 1px solid #ccc; }
.hscroll .end { margin-left: auto; }
.modal .hscroll { box-shadow: -29px 0 #f5f4f6, 12px 0 #f5f4f6; }
.sheets { display: flex; align-items: center; gap: 15px; height: 26px; padding-left: 7px; background: #f5f4f6; border-bottom: 1px solid #e2e2e2; color: #aaa; flex: none; }
.sheets .i { width: 11px; height: 11px; }
.sheets b { height: 25px; line-height: 24px; color: #333; font-weight: 600; border-bottom: 2px solid #2c7a52; }
.status { display: flex; align-items: center; height: 17px; padding: 1px 13px 0 25px; font-size: 9px; flex: none; color: #555; }
.caret { margin-left: auto; border: solid transparent; border-width: 3px 3px 0; border-top-color: #555; margin-right: 33px; }
.fb { margin-right: 34px; }
.status .s { width: 9px; height: 9px; }
.status .s + span { margin: 0 5px 0 7px; }

/* meeting side panel */
.side { flex: none; width: 338px; display: flex; flex-direction: column; font-family: "Inter", "Liberation Sans", sans-serif; border-right: 1px solid #ddd; }
.tile { position: relative; height: 180px; display: flex; justify-content: center; padding-top: 30px; background: #dedede; border: solid #aaa; border-width: 0 1px 1px 0; margin-bottom: 3px; box-shadow: 0 3px #ececec; flex: none; }
.fold { position: absolute; left: 10px; top: 1px; width: 19px; height: 19px; background: #adadad; color: #fff; border-radius: 2px; }
.fold .i { width: 13px; height: 13px; }
.avatar { width: 85px; height: 85px; border-radius: 50%; background: #cbcbcb; font-size: 36px; font-weight: 300; line-height: 85px; text-align: center; color: #222; }
.who { position: absolute; left: 0; bottom: 0; width: 57%; height: 20px; display: flex; align-items: center; justify-content: space-between; padding: 0 8px 0 11px; background: #f8f8f8; font-size: 12px; }
.who .i { color: #27a5d8; width: 9px; height: 9px; }
.chat { flex: 1; min-height: 0; display: flex; flex-direction: column; }
.chead { display: flex; align-items: center; justify-content: space-between; padding: 0 14px 0 10px; height: 38px; }
.chead h2 { font-size: 14px; }
.chead .i { width: 12px; height: 12px; }
.log { flex: 1; padding: 12px 13px; display: flex; flex-direction: column; gap: 19px; }
.log h3 { font-size: 12px; line-height: 18px; font-weight: 400; color: #aaa; }
.log p { display: flex; justify-content: space-between; font-size: 13px; line-height: 18px; margin-top: 5px; color: #444; }
.log time { font-size: 12px; color: #aaa; }
.compose { position: relative; padding: 4px 8px; border-top: 1px solid #eee; }
.to { display: flex; align-items: center; gap: 8px; font-size: 14px; color: #666; }
.to select { flex: 1; height: 30px; padding: 0 10px; border: 1px solid #ccc; border-radius: 4px; font-size: 12px; background: url("data:image/svg+xml,%3Csvg xmlns='http://www.w3.org/2000/svg' width='14' height='14' fill='none' stroke='%23222' stroke-width='1.500'%3E%3Cpath d='M2 4l5 5 5-5'/%3E%3C/svg%3E") no-repeat right 12px center; }
.compose textarea { display: block; width: 100%; height: 82px; margin-top: 7px; padding: 6px 10px; border: 1px solid #ccc; border-radius: 2px; resize: none; font-size: 14px; line-height: 18px; }
.compose textarea::placeholder { color: #ccc; }
.tip { position: absolute; left: 128px; top: 47px; height: 22px; padding: 0 6px; border: 1px solid #767676; background: #fff; color: #111; font: 11px/20px "Open Sans", sans-serif; }

/* meeting controls */
.controls { display: grid; grid-template-columns: 1fr auto 1fr; align-items: center; padding-top: 5px; background: #ececec; font-family: "Inter", sans-serif; }
.mid { display: flex; gap: 8px; }
.pill { width: 132px; height: 44px; border-radius: 22px; background: #fff; font-size: 16px; gap: 8px; box-shadow: 0 1px 3px rgba(0,0,0,.1); }
.pill .s { width: 9px; height: 9px; margin-left: 9px; }
.pill:nth-child(2) { width: 155px; }
.pill.sh { width: 103px; }
.red { color: #d4371c; }
.round { width: 44px; height: 44px; border-radius: 50%; background: #fff; box-shadow: 0 1px 3px rgba(0,0,0,.1); }
.round .s { width: 15px; height: 15px; }
.leave { background: #d4371c; color: #fff; }
.leave .i { width: 15px; height: 15px; }
.right { display: flex; justify-content: flex-end; padding-right: 20px; }
.duo { display: flex; height: 40px; border-radius: 20px; background: #fff; font-size: 14px; box-shadow: 0 1px 3px rgba(0,0,0,.1); }
.duo button { position: relative; gap: 6px; padding: 0 12px 0 11px; }
.duo .teal { color: #0a7ea8; border-left: 1px solid #e5e5e5; }
.reddot { position: absolute; left: 26px; top: 5px; width: 8px; height: 8px; border-radius: 50%; background: #d4371c; }

/* taskbar */
.task { display: flex; height: 40px; background: #352a22; color: #fff; flex: none; }
.task button { width: 48px; }
.task .big { width: 49px; }
.task .big .i { width: 24px; height: 24px; }
.task .big:nth-child(5) .i, .task .big:nth-child(7) .i { width: 22px; height: 22px; }
.task .big:nth-child(5) { margin-left: 3px; }
.task .run { background: #655c56; border-bottom: 2px solid #f0a070; width: 48px; margin-right: 1px; }
.task .hot { background: #835f44; border-bottom-color: #ff7600; }
.tray { margin-left: auto; display: flex; align-items: center; gap: 11px; padding-right: 25px; }
.tray > .i { width: 14px; height: 14px; }
.clock { display: flex; flex-direction: column; align-items: center; line-height: 18px; font-size: 11px; }
.act { position: relative; margin-left: 6px; display: flex; }
.act em { position: absolute; left: 8px; top: 7px; width: 16px; height: 16px; border-radius: 50%; border: 1px solid #999; background: #444; font: 700 10px/14px "Open Sans", sans-serif; text-align: center; }
.mark { position: absolute; right: 57px; bottom: 74px; display: flex; flex-direction: column; width: 236px; white-space: nowrap; color: #b8b8b8; pointer-events: none; font-size: 19px; line-height: 24px; }
.mark small { font-size: 14px; line-height: 20px; }
```
